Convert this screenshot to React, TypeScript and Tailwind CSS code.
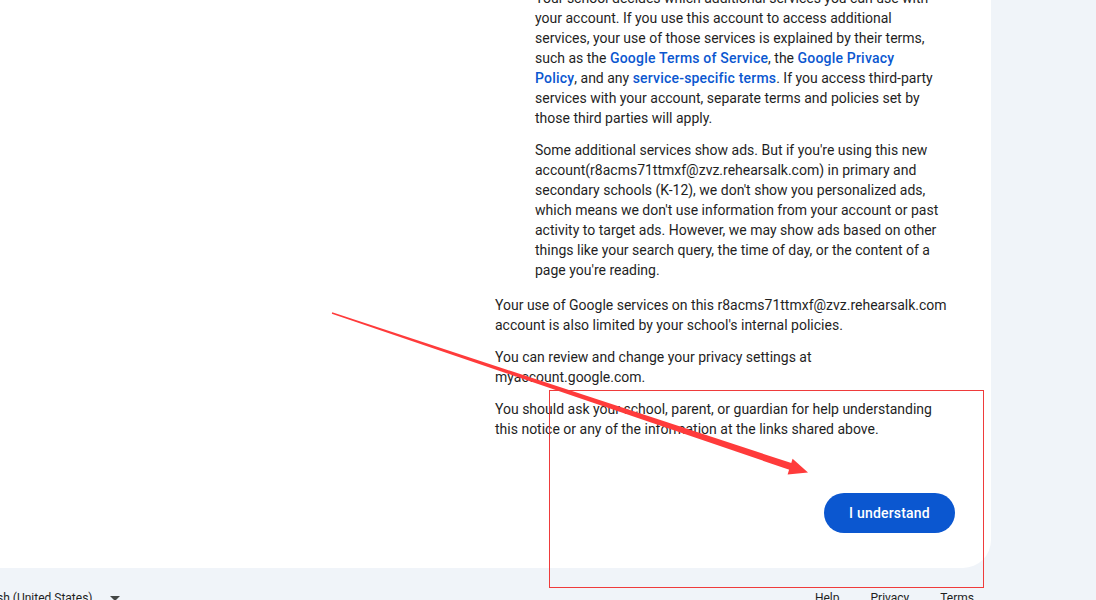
import React from "react";

const font = { fontFamily: "Roboto, 'Noto Sans', Arial, sans-serif" };

function Link({ children }: { children: React.ReactNode }) {
  return (
    <span className="font-medium tracking-[0.2px] text-[#0b57d0]">
      {children}
    </span>
  );
}

function Annotations() {
  // tapered pointer from the left side down to the button area
  return (
    <svg
      className="pointer-events-none absolute left-0 top-0"
      width={1096}
      height={600}
      viewBox="0 0 1096 600"
    >
      <polygon
        points="331.8,313.7 332.2,312.3 792.9,463.6 790.8,470.2"
        fill="#ff3b3b"
      />
      <polygon points="808,472.5 792.6,458.8 787.6,474.4" fill="#ff3b3b" />
      <rect
        x={549.5}
        y={390.5}
        width={434}
        height={197}
        fill="none"
        stroke="#ef3b3b"
        strokeWidth={1}
      />
    </svg>
  );
}

export default function App() {
  return (
    <div
      className="relative h-[600px] w-[1096px] overflow-hidden bg-[#f0f4f9] text-[#1f1f1f]"
      style={font}
    >
      <div className="flex h-[568px] w-[991px] flex-col rounded-br-[28px] bg-white">
        <div className="ml-[495px] mt-[-12px] flex w-[460px] flex-col whitespace-nowrap text-[14px] leading-[20px]">
          <div className="flex flex-col gap-[12px] pl-[40px]">
            <p>
              Your school decides which additional services you can use with
              <br />
              your account. If you use this account to access additional
              <br />
              services, your use of those services is explained by their terms,
              <br />
              such as the <Link>Google Terms of Service</Link>, the{" "}
              <Link>Google Privacy</Link>
              <br />
              <Link>Policy</Link>, and any <Link>service-specific terms</Link>.
              If you access third-party
              <br />
              services with your account, separate terms and policies set by
              <br />
              those third parties will apply.
            </p>
            <p>
              Some additional services show ads. But if you're using this new
              <br />
              account(r8acms71ttmxf@zvz.rehearsalk.com) in primary and
              <br />
              secondary schools (K-12), we don't show you personalized ads,
              <br />
              which means we don't use information from your account or past
              <br />
              activity to target ads. However, we may show ads based on other
              <br />
              things like your search query, the time of day, or the content of
              a
              <br />
              page you're reading.
            </p>
          </div>
          <p className="mt-[15px]">
            Your use of Google services on this r8acms71ttmxf@zvz.rehearsalk.com
            <br />
            account is also limited by your school's internal policies.
          </p>
          <p className="mt-[12px]">
            You can review and change your privacy settings at
            <br />
            myaccount.google.com.
          </p>
          <p className="mt-[12px]">
            You should ask your school, parent, or guardian for help
            understanding
            <br />
            this notice or any of the information at the links shared above.
          </p>
          <div className="mt-[54px] flex justify-end">
            <button className="h-[40px] w-[131px] rounded-full bg-[#0b57d0] text-[14px] font-medium tracking-[0.2px] text-white">
              I understand
            </button>
          </div>
        </div>
      </div>
      <div className="flex w-[991px] items-start justify-between pt-[22px] text-[12px] leading-[16px] text-[#1f1f1f]">
        <div className="ml-[-29px] flex items-center gap-[17px]">
          <span>English (United States)</span>
          <svg width="10" height="5" viewBox="0 0 10 5">
            <path d="M0 0 L5 5 L10 0 Z" fill="#444746" />
          </svg>
        </div>
        <div className="flex gap-[31px] pr-[17px]">
          <span>Help</span>
          <span>Privacy</span>
          <span>Terms</span>
        </div>
      </div>
      <Annotations />
    </div>
  );
}
